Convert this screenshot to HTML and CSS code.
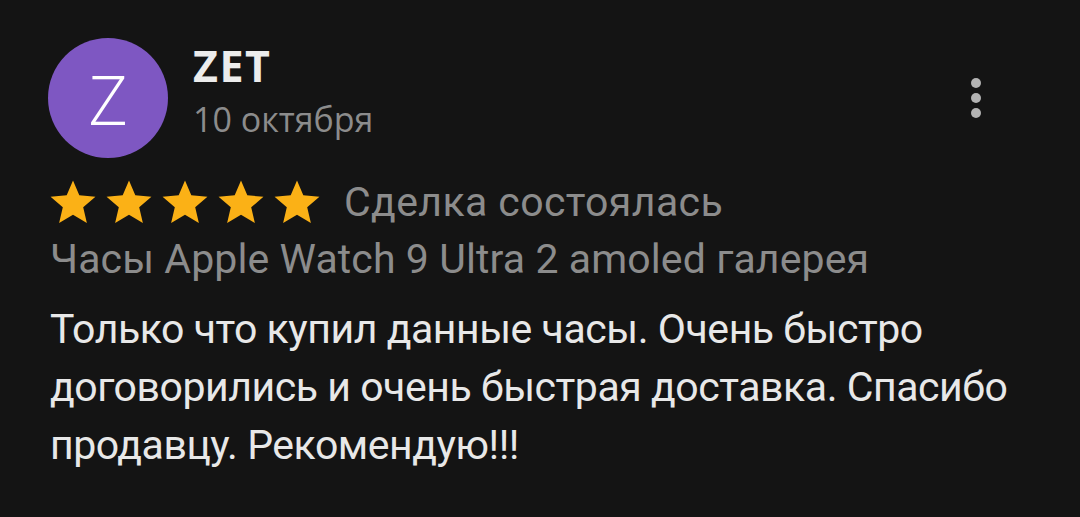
FILE: index.html
```html
<!DOCTYPE html>
<html lang="ru">
<head>
    <meta charset="UTF-8">
    <meta name="viewport" content="width=device-width, initial-scale=1.0">
    <title>Отзыв</title>
    <link rel="stylesheet" href="styles.css">
</head>
<body>

<div class="review">
    <div class="review-head">
        <div class="avatar">Z</div>
        <div class="author">
            <div class="author-name">ZET</div>
            <div class="author-date">10 октября</div>
        </div>
        <div class="menu">
            <span></span>
            <span></span>
            <span></span>
        </div>
    </div>

    <div class="rating">
        <div class="stars">
            <svg class="star" viewBox="1.8 1.8 20.4 19.6"><path d="M12 17.27L18.18 21l-1.64-7.03L22 9.24l-7.19-.61L12 2 9.19 8.63 2 9.24l5.46 4.73L5.82 21z"/></svg>
            <svg class="star" viewBox="1.8 1.8 20.4 19.6"><path d="M12 17.27L18.18 21l-1.64-7.03L22 9.24l-7.19-.61L12 2 9.19 8.63 2 9.24l5.46 4.73L5.82 21z"/></svg>
            <svg class="star" viewBox="1.8 1.8 20.4 19.6"><path d="M12 17.27L18.18 21l-1.64-7.03L22 9.24l-7.19-.61L12 2 9.19 8.63 2 9.24l5.46 4.73L5.82 21z"/></svg>
            <svg class="star" viewBox="1.8 1.8 20.4 19.6"><path d="M12 17.27L18.18 21l-1.64-7.03L22 9.24l-7.19-.61L12 2 9.19 8.63 2 9.24l5.46 4.73L5.82 21z"/></svg>
            <svg class="star" viewBox="1.8 1.8 20.4 19.6"><path d="M12 17.27L18.18 21l-1.64-7.03L22 9.24l-7.19-.61L12 2 9.19 8.63 2 9.24l5.46 4.73L5.82 21z"/></svg>
        </div>
        <span class="status">Сделка состоялась</span>
    </div>

    <div class="product">Часы Apple Watch 9 Ultra 2 amoled галерея</div>

    <p class="text">Только что купил данные часы. Очень быстро договорились и очень быстрая доставка. Спасибо продавцу. Рекомендую!!!</p>
</div>

</body>
</html>
```

FILE: styles.css
```css
body {
    margin: 0;
    background-color: #141414;
    font-family: Roboto, "Noto Sans", sans-serif;
}
.review {
    padding: 38px 50px 0 48px;
}
.review-head {
    display: flex;
    align-items: flex-start;
}
.avatar {
    width: 120px;
    height: 120px;
    border-radius: 50%;
    background-color: #7e57c2;
    color: #fff;
    font-family: "Open Sans", sans-serif;
    font-weight: 300;
    font-size: 68px;
    display: flex;
    align-items: center;
    justify-content: center;
    flex-shrink: 0;
}
.author {
    margin-left: 25px;
    font-family: "Open Sans", sans-serif;
}
.author-name {
    color: #ececec;
    font-weight: 700;
    font-size: 43px;
    line-height: 48px;
    letter-spacing: 1.5px;
    margin-top: 4px;
}
.author-date {
    color: #8c8c8c;
    font-size: 34px;
    line-height: 44px;
    margin-top: 7px;
}
.menu {
    margin-left: auto;
    margin-right: 49px;
    margin-top: 40px;
    display: flex;
    flex-direction: column;
    gap: 5px;
}
.menu span {
    width: 10px;
    height: 10px;
    border-radius: 50%;
    background-color: #b3b3b3;
}
.rating {
    display: flex;
    align-items: center;
    margin-top: 20px;
    margin-left: 2px;
}
.stars {
    display: flex;
    gap: 10px;
}
.star {
    width: 46px;
    height: 44px;
    fill: #fbb116;
}
.status {
    margin-left: 24px;
    color: #8c8c8c;
    font-size: 41px;
    letter-spacing: 0.4px;
}
.product {
    margin-top: 9px;
    margin-left: 2px;
    color: #8c8c8c;
    font-size: 41px;
    letter-spacing: 0.1px;
}
.text {
    margin: 17px 0 0 2px;
    color: #e8e8e8;
    font-size: 41px;
    line-height: 58px;
    letter-spacing: -0.45px;
}
```
